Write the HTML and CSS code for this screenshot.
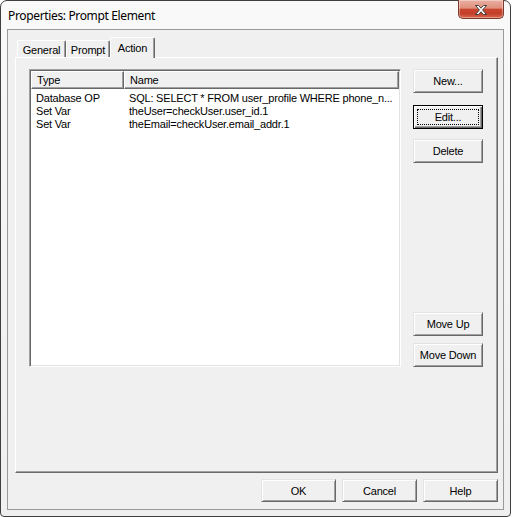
FILE: index.html
```html
<!DOCTYPE html>
<html>
<head>
<meta charset="utf-8">
<link rel="stylesheet" href="styles.css">
</head>
<body>
<div class="window">
  <div class="titlebar">
    <span class="title">Properties: Prompt Element</span>
    <div class="close">
      <svg width="14" height="12" viewBox="0 0 14 12">
        <path d="M1.5 1.5 L4.5 1.5 L7 4.2 L9.5 1.5 L12.5 1.5 L8.6 6 L12.5 10.5 L9.5 10.5 L7 7.8 L4.5 10.5 L1.5 10.5 L5.4 6 Z" fill="#ffffff" stroke="#3d3d3d" stroke-width="1" stroke-linejoin="round"/>
      </svg>
    </div>
  </div>
  <div class="client">
    <div class="tabs">
      <div class="tab tab-general">General</div>
      <div class="tab tab-prompt">Prompt</div>
      <div class="tab tab-action active">Action</div>
    </div>
    <div class="panel">
      <div class="listview">
        <div class="header">
          <div class="hcell col-type">Type</div>
          <div class="hcell col-name">Name</div>
        </div>
        <div class="rows">
          <div class="row"><span class="cell col-type">Database OP</span><span class="cell col-name">SQL: SELECT * FROM user_profile WHERE phone_n...</span></div>
          <div class="row"><span class="cell col-type">Set Var</span><span class="cell col-name">theUser=checkUser.user_id.1</span></div>
          <div class="row"><span class="cell col-type">Set Var</span><span class="cell col-name">theEmail=checkUser.email_addr.1</span></div>
        </div>
      </div>
      <div class="side">
        <div class="side-top">
          <div class="btn side-btn">New...</div>
          <div class="btn side-btn default btn-edit"><span class="focus">Edit...</span></div>
          <div class="btn side-btn btn-delete">Delete</div>
        </div>
        <div class="side-bottom">
          <div class="btn side-btn">Move Up</div>
          <div class="btn side-btn btn-down">Move Down</div>
        </div>
      </div>
    </div>
    <div class="footer">
      <div class="btn foot-btn">OK</div>
      <div class="btn foot-btn">Cancel</div>
      <div class="btn foot-btn">Help</div>
    </div>
  </div>
</div>
</body>
</html>
```
FILE: styles.css
```css
html, body {
  margin: 0;
  padding: 0;
  background: #ffffff;
}

.window {
  width: 511px;
  height: 517px;
  box-sizing: border-box;
  border: 1px solid #3f3f3f;
  border-radius: 7px 7px 4px 4px;
  background: linear-gradient(#f9f9f9, #efefef);
  padding: 0 6px 6px 6px;
  display: flex;
  flex-direction: column;
  font-family: "Liberation Sans", Arial, sans-serif;
  font-size: 11px;
  letter-spacing: -0.2px;
  color: #000;
}

.titlebar {
  height: 28px;
  display: flex;
  align-items: flex-start;
  flex-shrink: 0;
}

.title {
  margin-top: 6px;
  margin-left: 1px;
  font-family: "Noto Sans", "Open Sans", sans-serif;
  font-size: 12px;
  letter-spacing: -0.35px;
  color: #000;
}

.close {
  margin-left: auto;
  width: 46px;
  height: 19px;
  box-sizing: border-box;
  margin-top: -1px;
  border: 1px solid #7a3a2e;
  border-top: none;
  border-radius: 0 0 5px 5px;
  background: linear-gradient(#eab0a3 0%, #df8f7c 45%, #c9452d 52%, #c3402a 75%, #d8684c 100%);
  box-shadow: inset 0 0 0 1px rgba(255, 255, 255, 0.35);
  display: flex;
  align-items: center;
  justify-content: center;
}

.close svg {
  display: block;
  margin-top: 1px;
}

.client {
  flex: 1;
  border: 1px solid #9a9a9a;
  background: #f0f0f0;
  padding: 7px 5px 7px 7px;
  display: flex;
  flex-direction: column;
}

.tabs {
  height: 20px;
  display: flex;
  align-items: flex-end;
  padding-left: 2px;
  position: relative;
  z-index: 1;
}

.tab {
  height: 17px;
  box-sizing: border-box;
  border-left: 1px solid #ffffff;
  border-top: 1px solid #ffffff;
  border-right: 1px solid #696969;
  box-shadow: inset -1px 0 #a0a0a0;
  border-radius: 2px 2px 0 0;
  background: #f0f0f0;
  display: flex;
  align-items: center;
  justify-content: center;
  padding-top: 1px;
}

.tab-general { width: 49px; }
.tab-prompt { width: 44px; }
.tab-action { width: 45px; }

.tab.active {
  height: 21px;
  margin-bottom: -1px;
  padding-top: 0;
  padding-bottom: 1px;
}

.panel {
  height: 416px;
  box-sizing: border-box;
  border: 1px solid;
  border-color: #ffffff #696969 #696969 #ffffff;
  box-shadow: inset -1px -1px #a0a0a0;
  padding: 11px 0 0 13px;
  display: flex;
  gap: 12px;
}

.listview {
  width: 372px;
  height: 298px;
  box-sizing: border-box;
  border: 1px solid;
  border-color: #a0a0a0 #ffffff #ffffff #a0a0a0;
  box-shadow: inset 1px 1px #696969, inset -1px -1px #e3e3e3;
  background: #ffffff;
  padding: 1px;
  overflow: hidden;
}

.header {
  display: flex;
  height: 18px;
}

.hcell {
  box-sizing: border-box;
  height: 18px;
  background: #f0f0f0;
  border: 1px solid;
  border-color: #ffffff #696969 #696969 #ffffff;
  box-shadow: inset -1px -1px #a0a0a0;
  display: flex;
  align-items: center;
}

.hcell.col-type {
  width: 93px;
  flex-shrink: 0;
  padding-left: 5px;
}

.hcell.col-name {
  flex: 1;
  padding-left: 5px;
}

.rows {
  padding-top: 3px;
}

.row {
  display: flex;
  height: 13px;
  line-height: 13px;
  white-space: nowrap;
}

.cell.col-type {
  width: 93px;
  flex-shrink: 0;
  padding-left: 5px;
  box-sizing: border-box;
}

.cell.col-name {
  padding-left: 5px;
}

.side {
  width: 70px;
  height: 298px;
  display: flex;
  flex-direction: column;
  justify-content: space-between;
}

.side-top,
.side-bottom {
  display: flex;
  flex-direction: column;
}

.btn {
  box-sizing: border-box;
  background: #f0f0f0;
  border: 1px solid;
  border-color: #e3e3e3 #696969 #696969 #e3e3e3;
  box-shadow: inset 1px 1px #ffffff, inset -1px -1px #a0a0a0;
  display: flex;
  align-items: center;
  justify-content: center;
  white-space: nowrap;
}

.side-btn {
  width: 70px;
  height: 24px;
}

.btn-edit {
  margin-top: 12px;
}

.btn-delete {
  margin-top: 10px;
}

.btn-down {
  margin-top: 7px;
}

.btn.default {
  border: 1px solid #000000;
  box-shadow: inset 1px 1px #ffffff, inset -1px -1px #696969, inset -2px -2px #a0a0a0;
  padding: 3px;
}

.focus {
  flex: 1;
  align-self: stretch;
  border: 1px dotted #000000;
  display: flex;
  align-items: center;
  justify-content: center;
}

.footer {
  margin-top: 6px;
  display: flex;
  justify-content: flex-end;
  gap: 6px;
}

.foot-btn {
  width: 75px;
  height: 23px;
}
```
